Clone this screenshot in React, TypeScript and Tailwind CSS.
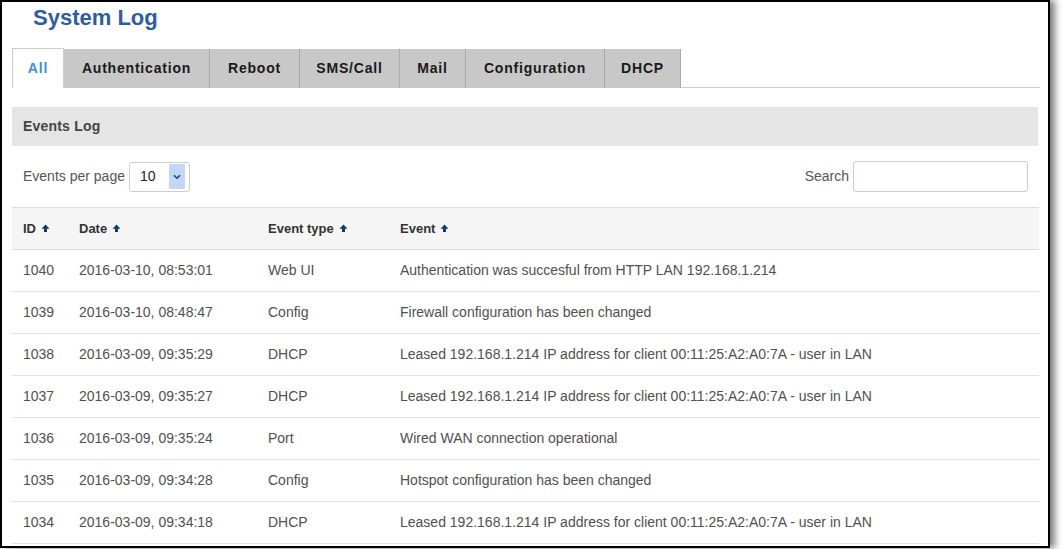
import React from 'react';

const tabs = ['All', 'Authentication', 'Reboot', 'SMS/Call', 'Mail', 'Configuration', 'DHCP'];
const tabWidths = ['w-[52px]', 'w-[146px]', 'w-[90px]', 'w-[100px]', 'w-[66px]', 'w-[139px]', 'w-[76px]'];

const rows = [
  ['1040', '2016-03-10, 08:53:01', 'Web UI', 'Authentication was succesful from HTTP LAN 192.168.1.214'],
  ['1039', '2016-03-10, 08:48:47', 'Config', 'Firewall configuration has been changed'],
  ['1038', '2016-03-09, 09:35:29', 'DHCP', 'Leased 192.168.1.214 IP address for client 00:11:25:A2:A0:7A - user in LAN'],
  ['1037', '2016-03-09, 09:35:27', 'DHCP', 'Leased 192.168.1.214 IP address for client 00:11:25:A2:A0:7A - user in LAN'],
  ['1036', '2016-03-09, 09:35:24', 'Port', 'Wired WAN connection operational'],
  ['1035', '2016-03-09, 09:34:28', 'Config', 'Hotspot configuration has been changed'],
  ['1034', '2016-03-09, 09:34:18', 'DHCP', 'Leased 192.168.1.214 IP address for client 00:11:25:A2:A0:7A - user in LAN'],
];

const SortArrow = () => (
  <svg width="9" height="9" viewBox="0 0 9 9" className="ml-[5px] inline-block align-[0px]">
    <path d="M4.5 0.5 L8.5 4.8 L6 4.8 L6 8 L3 8 L3 4.8 L0.5 4.8 Z" fill="#123a6a" />
  </svg>
);

export default function App() {
  return (
    <div className="w-[1064px] h-[549px] bg-white overflow-hidden" style={{ fontFamily: '"Liberation Sans", Arial, sans-serif' }}>
      <div className="w-[1050px] h-[548px] border-2 border-black bg-white shadow-[5px_0_7px_rgba(0,0,0,0.5)] pl-[10px] pr-[8px]">
        <h1 className="pl-[21px] pt-[2px] h-[46px] text-[22px] font-bold text-[#2c5da6] leading-[28px]">System Log</h1>

        <div className="flex h-[40px] border-b border-[#cccccc] pr-[2px]">
          {tabs.map((t, i) => (
            <div
              key={t}
              className={`${tabWidths[i]} flex items-center justify-center text-[14px] font-bold tracking-[0.8px] ${
                i === 0
                  ? 'bg-white text-[#3b8fe0] border border-[#cccccc] border-b-0 -mb-px h-[40px]'
                  : 'bg-[#c8c8c8] text-[#1a1a1a] border-r border-[#aaaaaa] h-[39px] mt-px'
              }`}
            >
              {t}
            </div>
          ))}
        </div>

        <div className="mt-[19px] mr-[2px] h-[39px] bg-[#e5e5e5] flex items-center pl-[11px] text-[14px] font-bold tracking-[0.2px] text-[#444444]">
          Events Log
        </div>

        <div className="mr-[2px] flex items-center justify-between h-[61px] pl-[11px] pr-[10px] text-[14px] text-[#555555]">
          <div className="flex items-center">
            <span>Events per page</span>
            <div className="ml-[4px] w-[61px] h-[30px] border border-[#cccccc] rounded-[3px] flex items-center bg-white">
              <span className="pl-[10px] text-[14px] text-[#222222] flex-1">10</span>
              <div className="w-[16px] h-[25px] mr-[4px] bg-[#c2d6f7] flex items-center justify-center rounded-[1px]">
                <svg width="8" height="6" viewBox="0 0 8 6">
                  <path d="M1 1.2 L4 4.2 L7 1.2" stroke="#1b3f7a" strokeWidth="1.6" fill="none" />
                </svg>
              </div>
            </div>
          </div>
          <div className="flex items-center">
            <span className="mr-[4px]">Search</span>
            <div className="w-[175px] h-[31px] border border-[#cccccc] rounded-[3px] bg-white" />
          </div>
        </div>

        <table className="w-[1027px] table-fixed border-collapse text-[14px] text-[#505050]">
          <colgroup>
            <col className="w-[67px]" />
            <col className="w-[189px]" />
            <col className="w-[132px]" />
            <col />
          </colgroup>
          <thead>
            <tr className="h-[42px] bg-[#f5f5f5] border-t border-b border-[#dddddd] text-[13px]">
              <th className="pl-[11px] text-left font-bold text-[#333333]">ID<SortArrow /></th>
              <th className="text-left font-bold text-[#333333]">Date<SortArrow /></th>
              <th className="text-left font-bold text-[#333333]">Event type<SortArrow /></th>
              <th className="text-left font-bold text-[#333333]">Event<SortArrow /></th>
            </tr>
          </thead>
          <tbody>
            {rows.map((r) => (
              <tr key={r[0] + r[1]} className="h-[42px] border-b border-[#e2e2e2]">
                <td className="pl-[11px]">{r[0]}</td>
                <td>{r[1]}</td>
                <td>{r[2]}</td>
                <td className="whitespace-nowrap">{r[3]}</td>
              </tr>
            ))}
          </tbody>
        </table>
      </div>
    </div>
  );
}
